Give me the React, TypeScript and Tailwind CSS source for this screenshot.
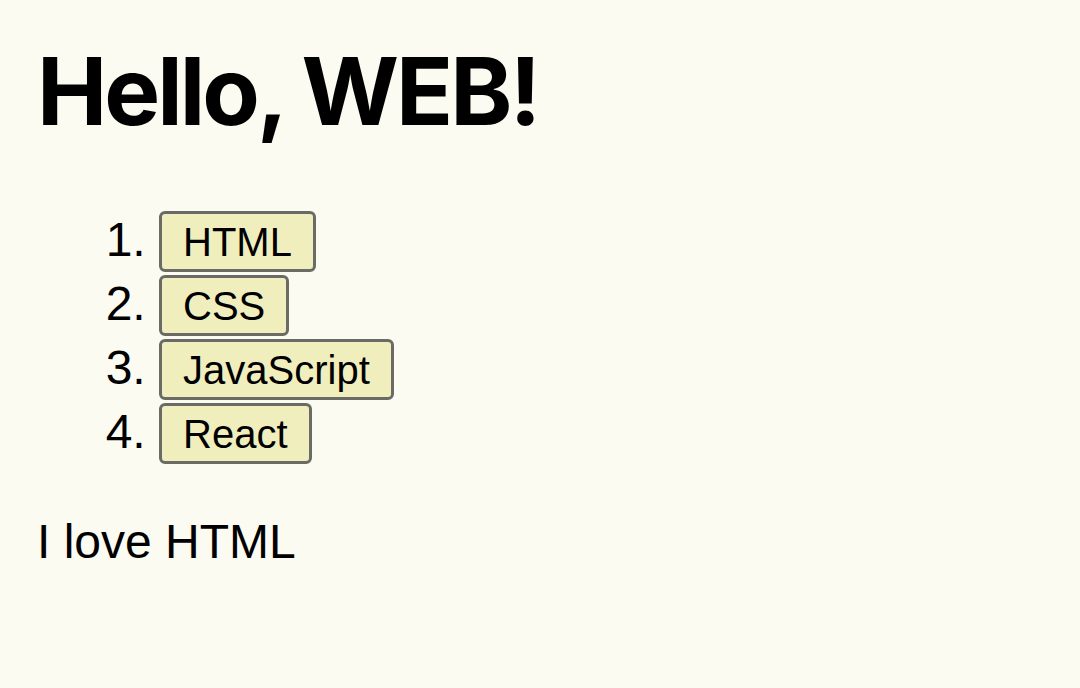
const topics = ["HTML", "CSS", "JavaScript", "React"];

export default function App() {
  return (
    <div className="min-h-[688px] bg-[#fbfbf1] px-[37px] pt-[37px] text-black [font-family:'Liberation_Sans',Arial,sans-serif]">
      <h1 className="[font-family:Inter,'Liberation_Sans',sans-serif] text-[94px] font-bold leading-[1.15] tracking-[-3px]">
        Hello, WEB!
      </h1>

      <ol className="mt-[66px] list-decimal pl-[122px] text-[48px] leading-[1.15]">
        {topics.map((topic) => (
          <li key={topic} className="mb-[3px]">
            <button
              type="button"
              className="h-[61px] rounded-[6px] border-[3px] border-[#6b6b66] bg-[#f0eebd] px-[21px] align-baseline text-[40px] leading-[1.1]"
            >
              {topic}
            </button>
          </li>
        ))}
      </ol>

      <p className="mt-[50px] text-[48px] leading-[1.15]">I love HTML</p>
    </div>
  );
}
